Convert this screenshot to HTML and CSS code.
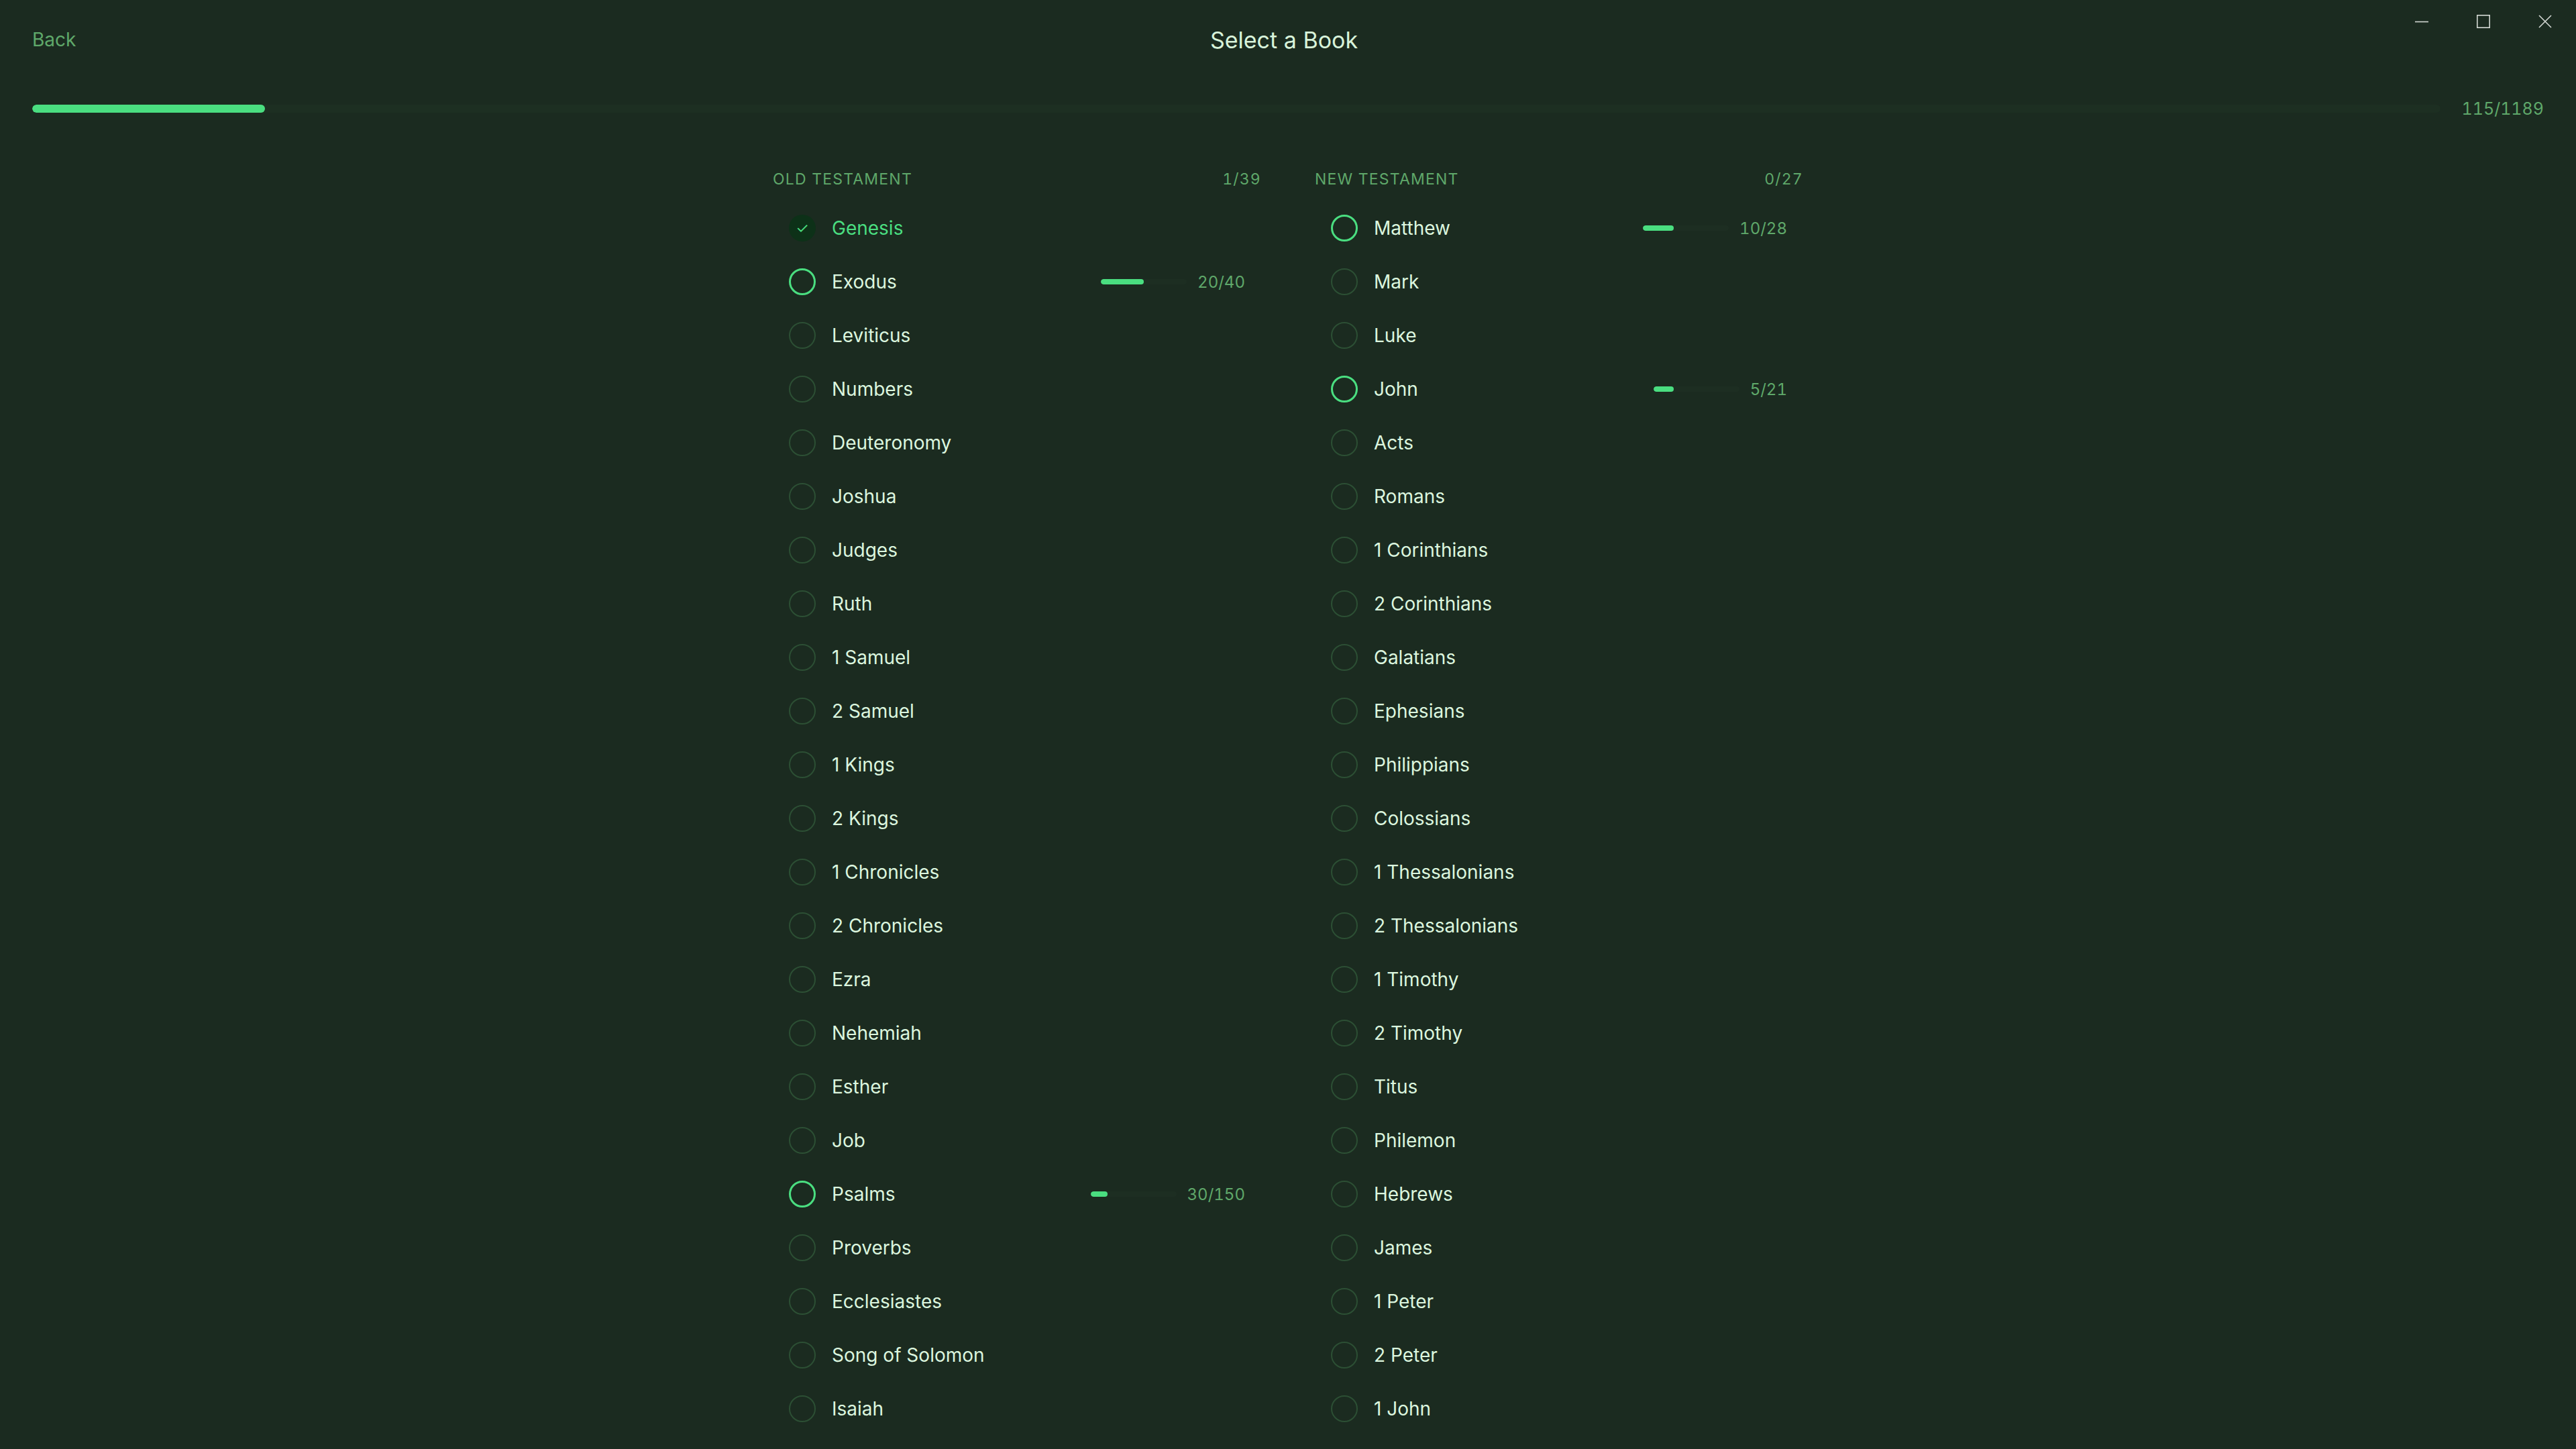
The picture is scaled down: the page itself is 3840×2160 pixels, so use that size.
FILE: index.html
```html
<!DOCTYPE html>
<html lang="en">
<head>
    <meta charset="UTF-8">
    <meta name="viewport" content="width=device-width, initial-scale=1.0">
    <title>Select a Book</title>
    <link rel="stylesheet" href="styles.css">
</head>
<body>
    <div class="window-controls">
        <button class="win-btn" aria-label="Minimize">
            <svg width="20" height="20" viewBox="0 0 20 20"><path d="M0 10.5h20" stroke="currentColor" stroke-width="1.6" fill="none"/></svg>
        </button>
        <button class="win-btn" aria-label="Maximize">
            <svg width="20" height="20" viewBox="0 0 20 20"><rect x="0.8" y="0.8" width="18.4" height="18.4" stroke="currentColor" stroke-width="1.6" fill="none"/></svg>
        </button>
        <button class="win-btn" aria-label="Close">
            <svg width="20" height="20" viewBox="0 0 20 20"><path d="M1 1l18 18M19 1L1 19" stroke="currentColor" stroke-width="1.6" fill="none"/></svg>
        </button>
    </div>

    <header class="topbar">
        <a class="back" href="#">Back</a>
        <h1 class="title">Select a Book</h1>
        <span></span>
    </header>

    <div class="overall">
        <div class="overall-track"><div class="overall-fill" style="width:9.67%"></div></div>
        <span class="overall-count">115/1189</span>
    </div>

    <main class="books">
        <section class="testament">
            <div class="testament-head">
                <span>Old Testament</span>
                <span>1/39</span>
            </div>
            <ul class="book-list">
                <li class="book done"><span class="ring">&#10003;</span><span class="name">Genesis</span></li>
                <li class="book started"><span class="ring"></span><span class="name">Exodus</span><span class="meter"><span class="fill" style="width:50%"></span></span><span class="count">20/40</span></li>
                <li class="book"><span class="ring"></span><span class="name">Leviticus</span></li>
                <li class="book"><span class="ring"></span><span class="name">Numbers</span></li>
                <li class="book"><span class="ring"></span><span class="name">Deuteronomy</span></li>
                <li class="book"><span class="ring"></span><span class="name">Joshua</span></li>
                <li class="book"><span class="ring"></span><span class="name">Judges</span></li>
                <li class="book"><span class="ring"></span><span class="name">Ruth</span></li>
                <li class="book"><span class="ring"></span><span class="name">1 Samuel</span></li>
                <li class="book"><span class="ring"></span><span class="name">2 Samuel</span></li>
                <li class="book"><span class="ring"></span><span class="name">1 Kings</span></li>
                <li class="book"><span class="ring"></span><span class="name">2 Kings</span></li>
                <li class="book"><span class="ring"></span><span class="name">1 Chronicles</span></li>
                <li class="book"><span class="ring"></span><span class="name">2 Chronicles</span></li>
                <li class="book"><span class="ring"></span><span class="name">Ezra</span></li>
                <li class="book"><span class="ring"></span><span class="name">Nehemiah</span></li>
                <li class="book"><span class="ring"></span><span class="name">Esther</span></li>
                <li class="book"><span class="ring"></span><span class="name">Job</span></li>
                <li class="book started"><span class="ring"></span><span class="name">Psalms</span><span class="meter"><span class="fill" style="width:20%"></span></span><span class="count">30/150</span></li>
                <li class="book"><span class="ring"></span><span class="name">Proverbs</span></li>
                <li class="book"><span class="ring"></span><span class="name">Ecclesiastes</span></li>
                <li class="book"><span class="ring"></span><span class="name">Song of Solomon</span></li>
                <li class="book"><span class="ring"></span><span class="name">Isaiah</span></li>
            </ul>
        </section>

        <section class="testament">
            <div class="testament-head">
                <span>New Testament</span>
                <span>0/27</span>
            </div>
            <ul class="book-list">
                <li class="book started"><span class="ring"></span><span class="name">Matthew</span><span class="meter"><span class="fill" style="width:35.7%"></span></span><span class="count">10/28</span></li>
                <li class="book"><span class="ring"></span><span class="name">Mark</span></li>
                <li class="book"><span class="ring"></span><span class="name">Luke</span></li>
                <li class="book started"><span class="ring"></span><span class="name">John</span><span class="meter"><span class="fill" style="width:23.8%"></span></span><span class="count">5/21</span></li>
                <li class="book"><span class="ring"></span><span class="name">Acts</span></li>
                <li class="book"><span class="ring"></span><span class="name">Romans</span></li>
                <li class="book"><span class="ring"></span><span class="name">1 Corinthians</span></li>
                <li class="book"><span class="ring"></span><span class="name">2 Corinthians</span></li>
                <li class="book"><span class="ring"></span><span class="name">Galatians</span></li>
                <li class="book"><span class="ring"></span><span class="name">Ephesians</span></li>
                <li class="book"><span class="ring"></span><span class="name">Philippians</span></li>
                <li class="book"><span class="ring"></span><span class="name">Colossians</span></li>
                <li class="book"><span class="ring"></span><span class="name">1 Thessalonians</span></li>
                <li class="book"><span class="ring"></span><span class="name">2 Thessalonians</span></li>
                <li class="book"><span class="ring"></span><span class="name">1 Timothy</span></li>
                <li class="book"><span class="ring"></span><span class="name">2 Timothy</span></li>
                <li class="book"><span class="ring"></span><span class="name">Titus</span></li>
                <li class="book"><span class="ring"></span><span class="name">Philemon</span></li>
                <li class="book"><span class="ring"></span><span class="name">Hebrews</span></li>
                <li class="book"><span class="ring"></span><span class="name">James</span></li>
                <li class="book"><span class="ring"></span><span class="name">1 Peter</span></li>
                <li class="book"><span class="ring"></span><span class="name">2 Peter</span></li>
                <li class="book"><span class="ring"></span><span class="name">1 John</span></li>
            </ul>
        </section>
    </main>
</body>
</html>
```

FILE: styles.css
```css
body, html {
    margin: 0;
    padding: 0;
    width: 100%;
    height: 100%;
    overflow: hidden;
    background: #1b2b20;
    color: #dcf6df;
    font-family: Inter, "Noto Sans", sans-serif;
}
body {
    display: flex;
    flex-direction: column;
    box-sizing: border-box;
    padding-bottom: 20px;
}
.window-controls {
    position: absolute;
    top: 0;
    right: 0;
    display: flex;
}
.win-btn {
    width: 92px;
    height: 64px;
    display: flex;
    align-items: center;
    justify-content: center;
    background: none;
    border: 0;
    padding: 0;
    color: #d3d8d3;
}
.topbar {
    height: 118px;
    flex-shrink: 0;
    padding: 0 48px;
    display: grid;
    grid-template-columns: 1fr auto 1fr;
    align-items: center;
}
.back {
    font-size: 28px;
    color: #5fa86a;
    text-decoration: none;
    justify-self: start;
}
.title {
    margin: 0 12px 0 0;
    font-size: 34px;
    font-weight: 400;
    color: #d8f3da;
}
.overall {
    margin-top: 32px;
    height: 24px;
    flex-shrink: 0;
    padding: 0 48px;
    display: flex;
    align-items: center;
    gap: 32px;
}
.overall-track {
    flex: 1;
    height: 12px;
    border-radius: 6px;
    background: #1d2f22;
    overflow: hidden;
}
.overall-fill {
    height: 100%;
    border-radius: 6px;
    background: #4ade80;
}
.overall-count {
    font-size: 25px;
    color: #5fa86a;
    font-variant-numeric: tabular-nums;
}
/* both testaments scroll together under the fixed header */
.books {
    flex: 1;
    min-height: 0;
    width: 1536px;
    margin: 77px auto 0;
    display: grid;
    grid-template-columns: 1fr 1fr;
    column-gap: 80px;
    align-items: start;
    overflow-y: auto;
    scrollbar-width: none;
}
.testament-head {
    height: 32px;
    margin-bottom: 17px;
    display: flex;
    justify-content: space-between;
    align-items: center;
    font-size: 23px;
    color: #5fa86a;
    text-transform: uppercase;
    letter-spacing: 1.2px;
    font-variant-numeric: tabular-nums;
}
.book-list {
    list-style: none;
    margin: 0;
    padding: 0;
}
.book {
    height: 80px;
    padding: 0 24px;
    display: flex;
    align-items: center;
    gap: 24px;
    font-size: 28px;
}
.ring {
    width: 40px;
    height: 40px;
    box-sizing: border-box;
    border-radius: 50%;
    border: 2px solid #2c4f34;
    flex-shrink: 0;
    display: flex;
    align-items: center;
    justify-content: center;
}
.book.started .ring {
    border: 3px solid #4ade80;
}
.book.done .ring {
    border: 0;
    background: #0d3118;
    color: #4ade80;
    font-size: 22px;
}
.book.done .name {
    color: #4ade80;
}
.name {
    flex: 1;
}
.meter {
    width: 128px;
    height: 8px;
    border-radius: 4px;
    background: #1d2e22;
    overflow: hidden;
}
.meter .fill {
    display: block;
    height: 100%;
    border-radius: 4px;
    background: #4ade80;
}
.count {
    margin-left: -8px;
    font-size: 24px;
    color: #5fa86a;
    font-variant-numeric: tabular-nums;
}
```
